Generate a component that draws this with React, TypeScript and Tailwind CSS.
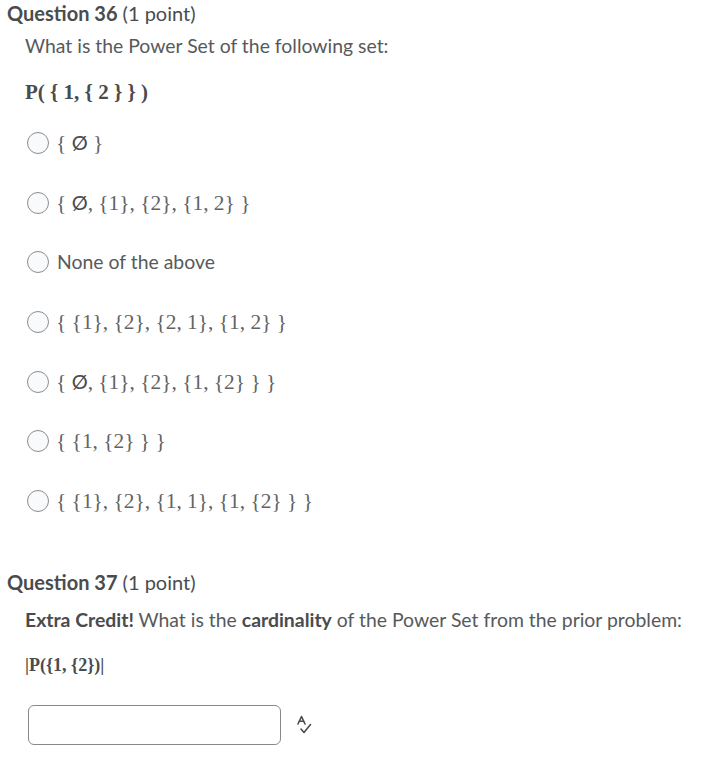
const sans = { fontFamily: 'Lato, "Open Sans", sans-serif' }
const serif = { fontFamily: '"Liberation Serif", "DejaVu Serif", serif' }

const options: { text: string; kind: 'serif' | 'sans' }[] = [
  { text: '{ Ø }', kind: 'serif' },
  { text: '{ Ø, {1}, {2}, {1, 2} }', kind: 'serif' },
  { text: 'None of the above', kind: 'sans' },
  { text: '{ {1}, {2}, {2, 1}, {1, 2} }', kind: 'serif' },
  { text: '{ Ø, {1}, {2}, {1, {2} } }', kind: 'serif' },
  { text: '{ {1, {2} } }', kind: 'serif' },
  { text: '{ {1}, {2}, {1, 1}, {1, {2} } }', kind: 'serif' },
]

// empty-set glyph comes out of a sans fallback in the original
const renderSet = (s: string) =>
  s.split('Ø').map((part, i, arr) => (
    <span key={i}>
      {part}
      {i < arr.length - 1 && (
        <span style={sans} className="text-[20px] text-[#494c4e]">
          Ø
        </span>
      )}
    </span>
  ))

const Radio = () => (
  <span className="ml-[2px] inline-block h-[22px] w-[22px] shrink-0 rounded-full border border-[#8a8d90] bg-[#f9fafb]" />
)

const SpellIcon = () => (
  <svg width="18" height="20" viewBox="0 0 18 20" fill="none" stroke="#494c4e" strokeWidth="1.6" strokeLinecap="round" strokeLinejoin="round">
    <path d="M2 9 L5.5 1.5 L9 9" />
    <path d="M3.4 6.2 H7.6" />
    <path d="M5 14 L8 17.5 L14.5 9.5" />
  </svg>
)

export default function App() {
  return (
    <div className="min-h-[757px] w-[711px] bg-white pt-[2px] text-[#494c4e]">
      <section className="pl-[7px]">
        <h2 style={sans} className="h-[22px] text-[20px] leading-[22px]">
          <span className="font-bold">Question 36</span> (1 point)
        </h2>
        <div className="pl-[18px]">
          <p style={sans} className="mt-[12px] h-[20px] text-[19.4px] leading-[20px] text-[#565a5c]">
            What is the Power Set of the following set:
          </p>
          <p style={serif} className="mt-[26px] h-[20px] text-[21px] font-bold leading-[20px]">
            P( {'{'} 1, {'{'} 2 {'}'} {'}'} )
          </p>
          <ul className="mt-[11px]">
            {options.map((o, i) => (
              <li key={i} className="flex h-[59.7px] items-center gap-[7px]">
                <Radio />
                {o.kind === 'sans' ? (
                  <span style={sans} className="pl-[1px] text-[19.4px] leading-[20px] text-[#565a5c]">
                    {o.text}
                  </span>
                ) : (
                  <span style={serif} className="text-[21.4px] leading-[20px] text-[#5f6366]">
                    {renderSet(o.text)}
                  </span>
                )}
              </li>
            ))}
          </ul>
        </div>
      </section>

      <section className="mt-[40px] pl-[7px]">
        <h2 style={sans} className="h-[22px] text-[20px] leading-[22px]">
          <span className="font-bold">Question 37</span> (1 point)
        </h2>
        <div className="pl-[18px]">
          <p style={sans} className="mt-[17px] h-[20px] text-[19.4px] leading-[20px] text-[#565a5c]">
            <span className="font-bold text-[#494c4e]">Extra Credit!</span> What is the{' '}
            <span className="font-bold text-[#494c4e]">cardinality</span> of the Power Set from the prior problem:
          </p>
          <p style={serif} className="mt-[25px] h-[20px] text-[18px] font-bold leading-[20px]">
            |P({'{'}1, {'{'}2{'}'})|
          </p>
          <div className="mt-[30px] flex items-center gap-[15px]">
            <input
              type="text"
              className="ml-[3px] h-[40px] w-[253px] rounded-[6px] border border-[#868a8e] bg-white px-3 outline-none"
            />
            <SpellIcon />
          </div>
        </div>
      </section>
    </div>
  )
}
